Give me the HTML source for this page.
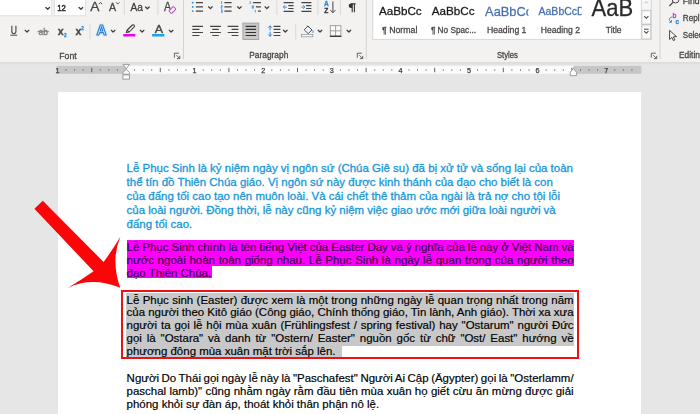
<!DOCTYPE html>
<html><head><meta charset="utf-8">
<style>
html,body{margin:0;padding:0;}
body{width:700px;height:414px;overflow:hidden;position:relative;background:#e6e6e6;font-family:"Liberation Sans",sans-serif;}
.abs{position:absolute;}
#ribbon{position:absolute;left:0;top:0;width:700px;height:61.5px;background:#f3f2f1;}
#ribshadow{position:absolute;left:0;top:61.5px;width:700px;height:3.5px;background:linear-gradient(#d9d9d9,#e6e6e6);}
#page{position:absolute;left:58px;top:92px;width:583px;height:330px;background:#fff;}
.ln{position:absolute;left:126.6px;white-space:nowrap;font-size:11.47px;line-height:14px;height:14px;color:#000;-webkit-text-stroke:0.18px currentColor;}
.j{}
.b{color:#1797d8;-webkit-text-stroke:0.3px currentColor;}
.p{color:#3a0048;}
.hl{position:absolute;}
</style></head><body>
<div id="ribbon"></div>
<div id="ribshadow"></div>
<!--RIBBON-START-->
<svg class="abs" style="left:0;top:0;will-change:transform" width="700" height="62" viewBox="0 0 700 62" font-family="Liberation Sans, sans-serif">
<defs>
<path id="chv" d="M-1.8 -0.9 L0 0.9 L1.8 -0.9" fill="none" stroke="#3c3c3c" stroke-width="1.25" stroke-linecap="round" stroke-linejoin="round"/>
<g id="lnch" fill="none" stroke="#555" stroke-width="0.9"><path d="M0 4.5 V0 H4.5"/><path d="M2 2 L5.2 5.2 M5.4 2.6 V5.4 H2.6"/></g>
</defs>
<!-- FONT GROUP -->
<rect x="-1" y="-1" width="52.8" height="16.8" fill="#fff" stroke="#dedede" stroke-width="1"/>
<use href="#chv" x="47.7" y="8.4"/>
<rect x="54.4" y="-1" width="31" height="16.8" fill="#fff" stroke="#dedede" stroke-width="1"/>
<text x="57.2" y="11.2" font-size="9.4" fill="#2a2a2a" textLength="8.6" lengthAdjust="spacingAndGlyphs" stroke="#2a2a2a" stroke-width="0.5">12</text>
<use href="#chv" x="80.9" y="8.4"/>
<text x="90.2" y="11.1" font-size="13.5" fill="#444" textLength="9.2" lengthAdjust="spacingAndGlyphs" stroke="#444" stroke-width="0.28">A</text>
<path d="M98.9 4.2 L100.5 2.4 L102.1 4.2" fill="none" stroke="#444" stroke-width="0.9"/>
<text x="109.1" y="11.1" font-size="10.5" fill="#444" textLength="7.1" lengthAdjust="spacingAndGlyphs" stroke="#444" stroke-width="0.28">A</text>
<path d="M116.1 2.3 L117.7 4.1 L119.3 2.3" fill="none" stroke="#444" stroke-width="0.9"/>
<path d="M124.3 0 V15 M157.9 0 V15 M90 24.3 V39.3" stroke="#d8d8d8" stroke-width="1"/>
<text x="130.6" y="11.1" font-size="10.4" fill="#3c3c3c" textLength="12.4" lengthAdjust="spacingAndGlyphs" stroke="#3c3c3c" stroke-width="0.28">Aa</text>
<use href="#chv" x="147.4" y="7.9"/>
<text x="164" y="10.7" font-size="12.5" fill="#444" textLength="7.2" lengthAdjust="spacingAndGlyphs" stroke="#444" stroke-width="0.28">A</text>
<rect x="-3.2" y="-1.9" width="6.4" height="3.8" rx="0.8" transform="translate(172.4 10) rotate(-45)" fill="#f3f3f3" stroke="#b44bc4" stroke-width="1"/>
<!-- row 2 -->
<text x="10.7" y="33.8" font-size="10.3" fill="#444" textLength="6.2" lengthAdjust="spacingAndGlyphs" stroke="#444" stroke-width="0.28">U</text>
<path d="M10.4 35.2 H17.2" stroke="#444" stroke-width="1"/>
<use href="#chv" x="27" y="31.2"/>
<text x="38.5" y="34.7" font-size="9.6" fill="#777" textLength="9.4" lengthAdjust="spacingAndGlyphs" stroke="#777" stroke-width="0.28">ab</text>
<path d="M37.3 31.7 H49" stroke="#777" stroke-width="0.9"/>
<text x="57.8" y="34.5" font-size="10.6" font-weight="bold" fill="#444" textLength="5.9" lengthAdjust="spacingAndGlyphs" stroke="#444" stroke-width="0.28">x</text>
<text x="63.9" y="37.2" font-size="4.8" fill="#2b8fd8" font-weight="bold" stroke="#2b8fd8" stroke-width="0.28">2</text>
<text x="75.6" y="34.5" font-size="10.6" font-weight="bold" fill="#444" textLength="5.9" lengthAdjust="spacingAndGlyphs" stroke="#444" stroke-width="0.28">x</text>
<text x="81.3" y="29.6" font-size="4.8" fill="#2b8fd8" font-weight="bold" stroke="#2b8fd8" stroke-width="0.28">2</text>
<text x="96.6" y="35.4" font-size="14.2" font-weight="bold" fill="none" stroke="#d3e8f8" stroke-width="2.8" stroke-linejoin="round" textLength="10" lengthAdjust="spacingAndGlyphs">A</text>
<text x="96.6" y="35.4" font-size="14.2" font-weight="bold" fill="#eaf4fc" stroke="#2a7fd0" stroke-width="1.1" stroke-linejoin="round" textLength="10" lengthAdjust="spacingAndGlyphs">A</text>
<use href="#chv" x="113.1" y="31.2"/>
<path d="M126.3 32.4 L127.2 30 L132.4 25 Q133.3 24.4 134.1 25.2 Q134.9 26 134.2 26.9 L129.2 32 Z M127.2 30 L129.2 32" fill="none" stroke="#3a3a3a" stroke-width="1.05" stroke-linejoin="round"/>
<rect x="123.3" y="34" width="12.1" height="2.5" fill="#f000f0"/>
<use href="#chv" x="142.1" y="31.2"/>
<text x="154.8" y="33.1" font-size="10.8" fill="#444" textLength="8.3" lengthAdjust="spacingAndGlyphs" stroke="#444" stroke-width="0.28">A</text>
<rect x="152.1" y="34" width="12.3" height="2.5" fill="#1ba4e4"/>
<use href="#chv" x="171.1" y="31.2"/>
<text x="59.3" y="58.6" font-size="8.7" fill="#444" textLength="17.4" lengthAdjust="spacingAndGlyphs" stroke="#444" stroke-width="0.28">Font</text>
<use href="#lnch" x="174.4" y="53.2"/>
<path d="M183.5 0 V59 M366.3 0 V59 M660 0 V59" stroke="#d2d2d2" stroke-width="1"/>
<!-- PARAGRAPH GROUP -->
<g fill="#2b86d6"><circle cx="192.7" cy="2.6" r="0.95"/><circle cx="192.7" cy="6.9" r="0.95"/><circle cx="192.7" cy="11.1" r="0.95"/></g>
<path d="M195.9 2.6 H203 M195.9 6.9 H203 M195.9 11.1 H203" stroke="#444" stroke-width="1.1"/>
<use href="#chv" x="210.4" y="7.7"/>
<path d="M221.6 1.2 V4 M221 5.6 H222.2 V7 H221 V8.2 H222.3 M221 9.8 H222.2 V12.4 H221 M221 11.1 H222.2" fill="none" stroke="#2b86d6" stroke-width="0.8"/>
<path d="M224.4 2.6 H231.6 M224.4 6.9 H231.6 M224.4 11.1 H231.6" stroke="#444" stroke-width="1.1"/>
<use href="#chv" x="239.4" y="7.7"/>
<path d="M250.2 1.2 V4 M252.2 5.8 H253.4 V8.2 H252.2 Z M255.3 9.9 V12.4" fill="none" stroke="#2b86d6" stroke-width="0.8"/>
<path d="M252.9 2.6 H260.9 M255.9 6.9 H260.9 M258 11.1 H260.9" stroke="#444" stroke-width="1.1"/>
<use href="#chv" x="266.9" y="7.7"/>
<path d="M276.9 0 V15 M317.9 0 V15 M340.4 0 V15 M295.7 24.3 V39.3" stroke="#d8d8d8" stroke-width="1"/>
<!-- decrease indent -->
<path d="M283.6 2.6 H293.6 M288.3 5.6 H293.6 M288.3 8.5 H293.6 M283.6 11.4 H293.6" stroke="#444" stroke-width="1.1"/>
<path d="M287 7.05 H283.4 M285.1 5.3 L283.3 7.05 L285.1 8.8" fill="none" stroke="#2b86d6" stroke-width="0.9"/>
<!-- increase indent -->
<path d="M301.4 2.6 H311.4 M306.1 5.6 H311.4 M306.1 8.5 H311.4 M301.4 11.4 H311.4" stroke="#444" stroke-width="1.1"/>
<path d="M301.2 7.05 H304.8 M303.1 5.3 L304.9 7.05 L303.1 8.8" fill="none" stroke="#2b86d6" stroke-width="0.9"/>
<!-- sort -->
<text x="323.9" y="6.4" font-size="6.6" font-weight="bold" fill="#2b86d6" stroke="#2b86d6" stroke-width="0.28">A</text>
<text x="324.2" y="12.9" font-size="6.6" font-weight="bold" fill="#333" stroke="#333" stroke-width="0.28">Z</text>
<path d="M332.9 1.4 V12.6 M330.4 10.2 L332.9 12.7 L335.4 10.2" fill="none" stroke="#444" stroke-width="1"/>
<!-- pilcrow -->
<path d="M352.2 3.8 V12.2 M354.4 3.8 V12.2 M355.6 3.9 H351 " fill="none" stroke="#333" stroke-width="1.1"/>
<path d="M352.2 3.4 H351 A2.3 2.3 0 0 0 351 8 H352.2 Z" fill="#333"/>
<!-- row2 align -->
<path d="M192.3 26.4 H203 M192.3 29.4 H199.4 M192.3 32.5 H203 M192.3 35.5 H199.4" stroke="#444" stroke-width="1.1"/>
<path d="M210.1 26.4 H220.9 M212.3 29.4 H218.7 M210.1 32.5 H220.9 M212.3 35.5 H218.7" stroke="#444" stroke-width="1.1"/>
<path d="M227.7 26.4 H238.4 M231.6 29.4 H238.4 M227.7 32.5 H238.4 M231.6 35.5 H238.4" stroke="#444" stroke-width="1.1"/>
<rect x="242.9" y="23.1" width="15.8" height="16.4" fill="#c9c9c9" stroke="#9d9d9d" stroke-width="0.9"/>
<path d="M245.6 26.4 H256.1 M245.6 29.4 H256.1 M245.6 32.5 H256.1 M245.6 35.5 H256.1" stroke="#333" stroke-width="1.2"/>
<!-- line spacing -->
<path d="M270.1 25.9 V30.4 M270.1 31.8 V36.2 M268.3 27.7 L270.1 25.8 L271.9 27.7 M268.3 34.4 L270.1 36.3 L271.9 34.4" fill="none" stroke="#2b86d6" stroke-width="1"/>
<path d="M273.6 26.4 H280.4 M273.6 29.4 H280.4 M273.6 32.5 H280.4 M273.6 35.5 H280.4" stroke="#444" stroke-width="1.1"/>
<use href="#chv" x="285.3" y="31.1"/>
<!-- shading -->
<path d="M304.2 29.8 L308 26 L312 30 L308.2 33.6 Z M307 25.6 L308.8 27.4" fill="none" stroke="#444" stroke-width="0.9" stroke-linejoin="round"/>
<path d="M312.6 30.2 Q313.6 31.8 312.9 32.9" fill="none" stroke="#2b86d6" stroke-width="1"/>
<rect x="301.6" y="34.4" width="11.2" height="2.4" fill="#fbfbfb" stroke="#8c8c8c" stroke-width="0.7"/>
<use href="#chv" x="320" y="31.1"/>
<!-- borders -->
<rect x="330.3" y="25.7" width="10.6" height="10.4" fill="#fbfbfb" stroke="#8a8a8a" stroke-width="0.8"/>
<path d="M335.6 25.7 V36 M330.3 30.8 H340.9" stroke="#8a8a8a" stroke-width="0.8"/>
<path d="M329.9 36.3 H341.3" stroke="#333" stroke-width="1.3"/>
<use href="#chv" x="348.9" y="31.1"/>
<text x="249.3" y="58.4" font-size="8.7" fill="#444" textLength="39" lengthAdjust="spacingAndGlyphs" stroke="#444" stroke-width="0.28">Paragraph</text>
<use href="#lnch" x="357.3" y="53.2"/>

<!-- STYLES GROUP -->
<rect x="372.7" y="-1" width="278.5" height="40.4" fill="#fff" stroke="#d6d6d6" stroke-width="1"/>
<text x="378.9" y="15.4" font-size="11.6" fill="#1a1a1a" textLength="42.8" lengthAdjust="spacingAndGlyphs" stroke="#1a1a1a" stroke-width="0.28">AaBbCc</text>
<text x="382" y="32.8" font-size="8.8" fill="#484848" textLength="35.4" lengthAdjust="spacingAndGlyphs" stroke="#484848" stroke-width="0.28">¶ Normal</text>
<text x="431.8" y="15.4" font-size="11.6" fill="#1a1a1a" textLength="42.8" lengthAdjust="spacingAndGlyphs" stroke="#1a1a1a" stroke-width="0.28">AaBbCc</text>
<text x="430.9" y="32.8" font-size="8.8" fill="#484848" textLength="45.2" lengthAdjust="spacingAndGlyphs" stroke="#484848" stroke-width="0.28">¶ No Spac...</text>
<svg x="484" y="0" width="44.4" height="22" viewBox="0 0 44.4 22"><text x="1.1" y="16.3" font-size="13.2" fill="#4771b6" textLength="47" lengthAdjust="spacingAndGlyphs" stroke="#4771b6" stroke-width="0.28">AaBbCc</text></svg>
<text x="487" y="32.7" font-size="8.8" fill="#484848" textLength="39.4" lengthAdjust="spacingAndGlyphs" stroke="#484848" stroke-width="0.28">Heading 1</text>
<svg x="537" y="0" width="44.7" height="22" viewBox="0 0 44.7 22"><text x="1.5" y="15.1" font-size="10.5" fill="#4771b6" textLength="46.2" lengthAdjust="spacingAndGlyphs" stroke="#4771b6" stroke-width="0.28">AaBbCcD</text></svg>
<text x="540.8" y="32.7" font-size="8.8" fill="#484848" textLength="39.2" lengthAdjust="spacingAndGlyphs" stroke="#484848" stroke-width="0.28">Heading 2</text>
<text x="591.6" y="16.3" font-size="23.4" fill="#2b2b2b" textLength="41.6" lengthAdjust="spacingAndGlyphs" stroke="#2b2b2b" stroke-width="0.28">AaB</text>
<text x="605.8" y="32.7" font-size="8.8" fill="#484848" textLength="15.8" lengthAdjust="spacingAndGlyphs" stroke="#484848" stroke-width="0.28">Title</text>
<!-- scroll buttons -->
<rect x="641.4" y="-1" width="9.8" height="40.4" fill="#f7f7f7" stroke="#d6d6d6" stroke-width="1"/>
<path d="M641.4 10.3 H651.2 M641.4 24.5 H651.2" stroke="#cfcfcf" stroke-width="1"/>
<rect x="641.9" y="10.8" width="8.8" height="13.2" fill="#fdfdfd" stroke="#c4c4c4" stroke-width="0.8"/>
<rect x="641.9" y="25" width="8.8" height="13.9" fill="#fdfdfd" stroke="#c4c4c4" stroke-width="0.8"/>
<path d="M644.4 3.4 L646.3 1.6 L648.2 3.4" fill="none" stroke="#bdbdbd" stroke-width="1"/>
<path d="M644.2 16.2 L646.3 18.3 L648.4 16.2" fill="none" stroke="#444" stroke-width="1.1"/>
<path d="M644 29.2 H648.6" stroke="#444" stroke-width="1"/>
<path d="M644.2 31.2 L646.3 33.3 L648.4 31.2" fill="none" stroke="#444" stroke-width="1.1"/>
<text x="497" y="58.4" font-size="8.7" fill="#444" textLength="20.8" lengthAdjust="spacingAndGlyphs" stroke="#444" stroke-width="0.28">Styles</text>
<use href="#lnch" x="651.3" y="53.2"/>

<!-- EDITING GROUP -->
<circle cx="675.6" cy="-0.4" r="3.4" fill="none" stroke="#444" stroke-width="1"/>
<path d="M673.2 2.2 L669.4 6" stroke="#444" stroke-width="1.2"/>
<text x="682.8" y="4.4" font-size="9.4" fill="#444" textLength="16.8" lengthAdjust="spacingAndGlyphs" stroke="#444" stroke-width="0.28">Find</text>
<text x="672.6" y="17.8" font-size="6.4" font-weight="bold" fill="#b44bc4" stroke="#b44bc4" stroke-width="0.28">b</text>
<text x="675.6" y="23.6" font-size="6.4" font-weight="bold" fill="#2b86d6" stroke="#2b86d6" stroke-width="0.28">c</text>
<path d="M672.3 17 Q668.6 17.4 669.6 20.6 L671.2 22.2 M671.4 20 V22.3 H669.2" fill="none" stroke="#2b86d6" stroke-width="0.9"/>
<text x="682.8" y="21.4" font-size="9.4" fill="#444" textLength="16.8" lengthAdjust="spacingAndGlyphs" stroke="#444" stroke-width="0.28">Repl</text>
<path d="M669.6 30.4 V39.4 L671.9 37.4 L673.4 40.6 L674.9 39.9 L673.4 36.8 L676.5 36.6 Z" fill="#f8f8f8" stroke="#333" stroke-width="0.9" stroke-linejoin="round"/>
<text x="682.8" y="38.2" font-size="9.4" fill="#444" textLength="20" lengthAdjust="spacingAndGlyphs" stroke="#444" stroke-width="0.28">Selec</text>
<text x="679" y="58.4" font-size="8.7" fill="#444" textLength="25.6" lengthAdjust="spacingAndGlyphs" stroke="#444" stroke-width="0.28">Editing</text>

</svg>
<!--RIBBON-END-->
<div id="page"></div>
<!--RULER-START-->
<svg class="abs" style="left:0;top:60px;will-change:transform" width="700" height="24" viewBox="0 60 700 24" font-family="Liberation Sans, sans-serif">
<rect x="56.5" y="65.8" width="69.5" height="8" fill="#c6c6c6"/>
<rect x="126" y="65.8" width="447.3" height="8" fill="#fbfbfb"/>
<rect x="573.3" y="65.8" width="68" height="8" fill="#c6c6c6"/>
<text x="57.4" y="72.5" font-size="7.2" fill="#3c3c3c" stroke="#3c3c3c" stroke-width="0.25" text-anchor="middle">1</text>
<rect x="65.5" y="69.4" width="1" height="1.2" fill="#555"/>
<rect x="74.1" y="69.4" width="1" height="1.2" fill="#555"/>
<rect x="82.6" y="69.4" width="1" height="1.2" fill="#555"/>
<path d="M91.7 67.8 V72.2" stroke="#555" stroke-width="0.9"/>
<rect x="99.8" y="69.4" width="1" height="1.2" fill="#555"/>
<rect x="108.3" y="69.4" width="1" height="1.2" fill="#555"/>
<rect x="116.9" y="69.4" width="1" height="1.2" fill="#555"/>
<rect x="134.1" y="69.4" width="1" height="1.2" fill="#555"/>
<rect x="142.7" y="69.4" width="1" height="1.2" fill="#555"/>
<rect x="151.2" y="69.4" width="1" height="1.2" fill="#555"/>
<path d="M160.3 67.8 V72.2" stroke="#555" stroke-width="0.9"/>
<rect x="168.4" y="69.4" width="1" height="1.2" fill="#555"/>
<rect x="176.9" y="69.4" width="1" height="1.2" fill="#555"/>
<rect x="185.5" y="69.4" width="1" height="1.2" fill="#555"/>
<text x="194.6" y="72.5" font-size="7.2" fill="#3c3c3c" stroke="#3c3c3c" stroke-width="0.25" text-anchor="middle">1</text>
<rect x="202.7" y="69.4" width="1" height="1.2" fill="#555"/>
<rect x="211.2" y="69.4" width="1" height="1.2" fill="#555"/>
<rect x="219.8" y="69.4" width="1" height="1.2" fill="#555"/>
<path d="M228.9 67.8 V72.2" stroke="#555" stroke-width="0.9"/>
<rect x="237.0" y="69.4" width="1" height="1.2" fill="#555"/>
<rect x="245.5" y="69.4" width="1" height="1.2" fill="#555"/>
<rect x="254.1" y="69.4" width="1" height="1.2" fill="#555"/>
<text x="263.2" y="72.5" font-size="7.2" fill="#3c3c3c" stroke="#3c3c3c" stroke-width="0.25" text-anchor="middle">2</text>
<rect x="271.3" y="69.4" width="1" height="1.2" fill="#555"/>
<rect x="279.9" y="69.4" width="1" height="1.2" fill="#555"/>
<rect x="288.4" y="69.4" width="1" height="1.2" fill="#555"/>
<path d="M297.5 67.8 V72.2" stroke="#555" stroke-width="0.9"/>
<rect x="305.6" y="69.4" width="1" height="1.2" fill="#555"/>
<rect x="314.1" y="69.4" width="1" height="1.2" fill="#555"/>
<rect x="322.7" y="69.4" width="1" height="1.2" fill="#555"/>
<text x="331.8" y="72.5" font-size="7.2" fill="#3c3c3c" stroke="#3c3c3c" stroke-width="0.25" text-anchor="middle">3</text>
<rect x="339.9" y="69.4" width="1" height="1.2" fill="#555"/>
<rect x="348.4" y="69.4" width="1" height="1.2" fill="#555"/>
<rect x="357.0" y="69.4" width="1" height="1.2" fill="#555"/>
<path d="M366.1 67.8 V72.2" stroke="#555" stroke-width="0.9"/>
<rect x="374.2" y="69.4" width="1" height="1.2" fill="#555"/>
<rect x="382.8" y="69.4" width="1" height="1.2" fill="#555"/>
<rect x="391.3" y="69.4" width="1" height="1.2" fill="#555"/>
<text x="400.4" y="72.5" font-size="7.2" fill="#3c3c3c" stroke="#3c3c3c" stroke-width="0.25" text-anchor="middle">4</text>
<rect x="408.5" y="69.4" width="1" height="1.2" fill="#555"/>
<rect x="417.0" y="69.4" width="1" height="1.2" fill="#555"/>
<rect x="425.6" y="69.4" width="1" height="1.2" fill="#555"/>
<path d="M434.7 67.8 V72.2" stroke="#555" stroke-width="0.9"/>
<rect x="442.8" y="69.4" width="1" height="1.2" fill="#555"/>
<rect x="451.3" y="69.4" width="1" height="1.2" fill="#555"/>
<rect x="459.9" y="69.4" width="1" height="1.2" fill="#555"/>
<text x="469.0" y="72.5" font-size="7.2" fill="#3c3c3c" stroke="#3c3c3c" stroke-width="0.25" text-anchor="middle">5</text>
<rect x="477.1" y="69.4" width="1" height="1.2" fill="#555"/>
<rect x="485.6" y="69.4" width="1" height="1.2" fill="#555"/>
<rect x="494.2" y="69.4" width="1" height="1.2" fill="#555"/>
<path d="M503.3 67.8 V72.2" stroke="#555" stroke-width="0.9"/>
<rect x="511.4" y="69.4" width="1" height="1.2" fill="#555"/>
<rect x="520.0" y="69.4" width="1" height="1.2" fill="#555"/>
<rect x="528.5" y="69.4" width="1" height="1.2" fill="#555"/>
<text x="537.6" y="72.5" font-size="7.2" fill="#3c3c3c" stroke="#3c3c3c" stroke-width="0.25" text-anchor="middle">6</text>
<rect x="545.7" y="69.4" width="1" height="1.2" fill="#555"/>
<rect x="554.2" y="69.4" width="1" height="1.2" fill="#555"/>
<rect x="562.8" y="69.4" width="1" height="1.2" fill="#555"/>
<path d="M571.9 67.8 V72.2" stroke="#555" stroke-width="0.9"/>
<rect x="580.0" y="69.4" width="1" height="1.2" fill="#555"/>
<rect x="588.5" y="69.4" width="1" height="1.2" fill="#555"/>
<rect x="597.1" y="69.4" width="1" height="1.2" fill="#555"/>
<text x="606.2" y="72.5" font-size="7.2" fill="#3c3c3c" stroke="#3c3c3c" stroke-width="0.25" text-anchor="middle">7</text>
<rect x="614.3" y="69.4" width="1" height="1.2" fill="#555"/>
<rect x="622.8" y="69.4" width="1" height="1.2" fill="#555"/>
<rect x="631.4" y="69.4" width="1" height="1.2" fill="#555"/>
<path d="M122.9 64.4 H129.5 L126.2 68.9 Z" fill="#fafafa" stroke="#8a8a8a" stroke-width="0.8" stroke-linejoin="round"/>
<path d="M122.9 74.2 V72.6 L126.2 69.3 L129.5 72.6 V74.2 Z" fill="#fafafa" stroke="#8a8a8a" stroke-width="0.8" stroke-linejoin="round"/>
<rect x="122.9" y="74.9" width="6.6" height="4.2" fill="#fafafa" stroke="#8a8a8a" stroke-width="0.8"/>
<path d="M570.2 75.6 V72.4 L573.4 68.4 L576.6 72.4 V75.6 Z" fill="#fafafa" stroke="#8a8a8a" stroke-width="0.8" stroke-linejoin="round"/>
</svg>
<!--RULER-END-->

<!-- highlights -->
<div class="hl" style="left:126.5px;top:240px;width:447.5px;height:25.5px;background:#fb00fb"></div>
<div class="hl" style="left:126.5px;top:265px;width:85px;height:13.3px;background:#fb00fb"></div>
<div class="hl" style="left:125.5px;top:293px;width:448.5px;height:52.5px;background:#c8c8c8"></div>
<div class="hl" style="left:125.5px;top:345px;width:216px;height:13px;background:#c8c8c8"></div>

<!-- paragraph 1 -->
<div class="ln b" style="top:161.3px">Lễ Phục Sinh là kỷ niệm ngày vị ngôn sứ (Chúa Giê su) đã bị xử tử và sống lại của toàn</div>
<div class="ln b" style="top:175.3px">thể tín đồ Thiên Chúa giáo. Vị ngôn sứ này được kinh thánh của đạo cho biết là con</div>
<div class="ln b" style="top:189.3px">của đấng tối cao tạo nên muôn loài. Và cái chết thê thảm của ngài là trả nợ cho tội lỗi</div>
<div class="ln b" style="top:203.3px">của loài người. Đồng thời, lễ này cũng kỷ niệm việc giao ước mới giữa loài người và</div>
<div class="ln b" style="top:217.3px">đấng tối cao.</div>

<!-- paragraph 2 -->
<div class="ln j p" style="top:240.3px;word-spacing:-0.191px">Lễ Phục Sinh chính là tên tiếng Việt của Easter Day và ý nghĩa của lễ này ở Việt Nam và</div>
<div class="ln j p" style="top:253.1px;word-spacing:0.531px">nước ngoài hoàn toàn giống nhau. Lễ Phục Sinh là ngày lễ quan trong của người theo</div>
<div class="ln p" style="top:265.8px">đạo Thiên Chúa.</div>

<!-- paragraph 3 -->
<div class="ln j" style="top:292.7px;word-spacing:0.17px">Lễ Phục sinh (Easter) được xem là một trong những ngày lễ quan trọng nhất trong năm</div>
<div class="ln j" style="top:305.4px;word-spacing:-0.051px">của người theo Kitô giáo (Công giáo, Chính thống giáo, Tin lành, Anh giáo). Thời xa xưa</div>
<div class="ln j" style="top:318.1px;word-spacing:0.671px">người ta gọi lễ hội mùa xuân (Frühlingsfest / spring festival) hay "Ostarum" người Đức</div>
<div class="ln j" style="top:330.8px;word-spacing:1.695px">gọi là "Ostara" và danh từ "Ostern/ Easter" nguồn gốc từ chữ "Ost/ East" hướng về</div>
<div class="ln" style="top:343.5px">phương đông mùa xuân mặt trời sắp lên.</div>

<!-- paragraph 4 -->
<div class="ln j" style="top:371.4px;word-spacing:-0.607px">Người Do Thái gọi ngày lễ này là "Paschafest" Người Ai Cập (Ägypter) gọi là "Osterlamm/</div>
<div class="ln j" style="top:384.2px;word-spacing:0.112px">paschal lamb)" cũng nhằm ngày rằm đầu tiên mùa xuân họ giết cừu ăn mừng được giải</div>
<div class="ln" style="top:397px">phóng khỏi sự đàn áp, thoát khỏi thân phận nô lệ.</div>

<!-- red box -->
<div class="abs" style="left:120.8px;top:289.6px;width:454.2px;height:65.4px;border:2px solid #ea1216;box-sizing:content-box"></div>

<!-- arrow -->
<svg class="abs" style="left:0;top:0" width="700" height="414" viewBox="0 0 700 414">
<path d="M42.8 200.8 L103.6 262 Q112.4 250 120.4 236.8 Q110.5 259.8 120.2 287.8 Q92.1 276.3 67.6 287.9 Q81 280.2 93.6 271.3 L34.4 208.8 Z" fill="#fb0509"/>
</svg>
</body></html>
